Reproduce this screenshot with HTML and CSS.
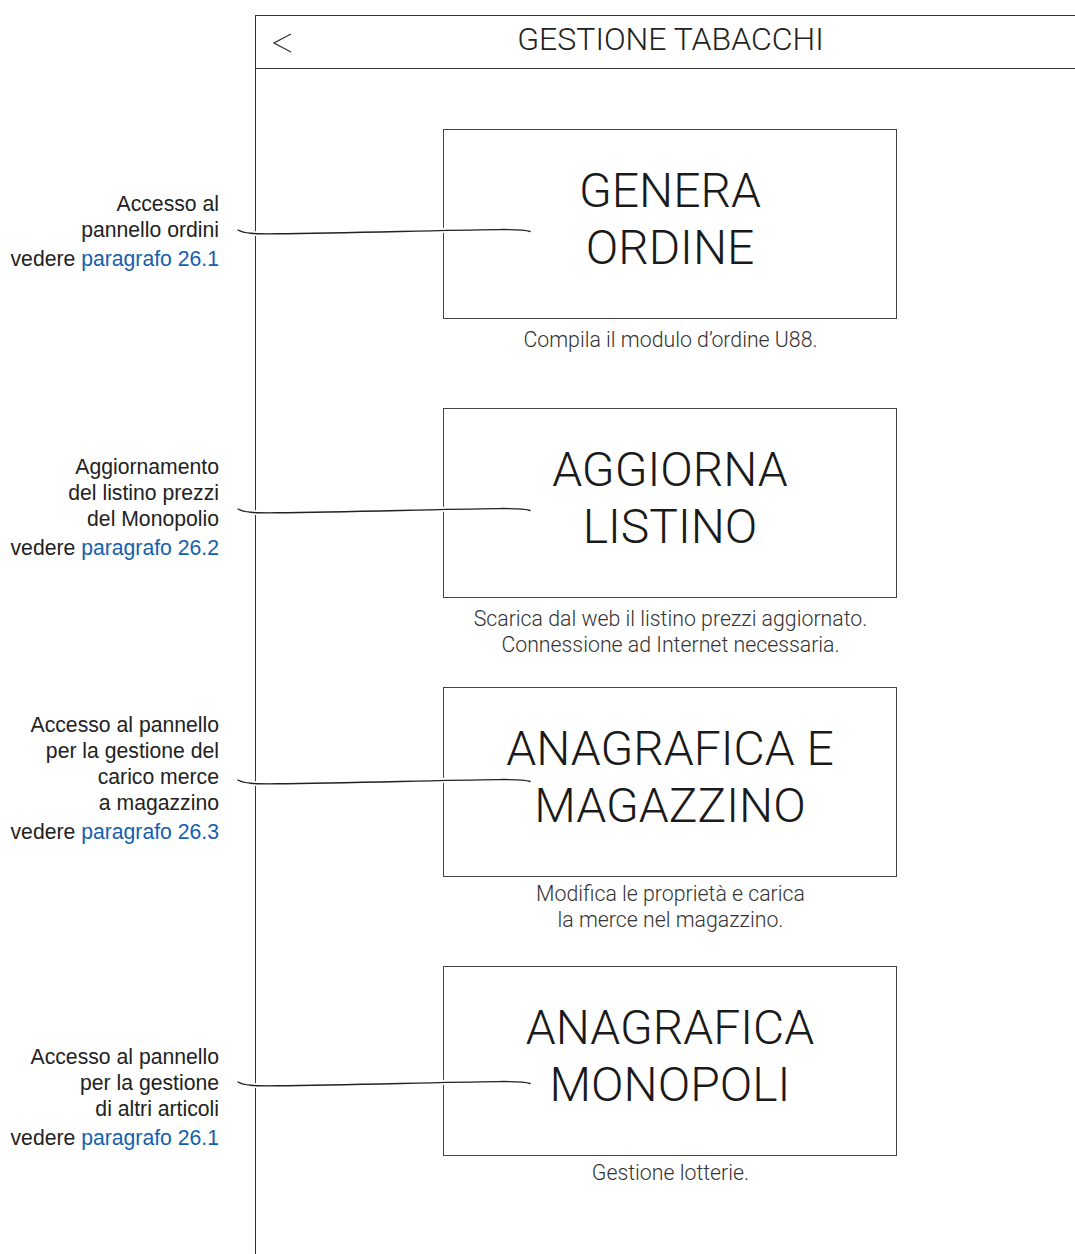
FILE: index.html
```html
<!DOCTYPE html>
<html lang="it">
<head>
    <meta charset="UTF-8">
    <meta name="viewport" content="width=device-width, initial-scale=1.0">
    <title>Gestione tabacchi</title>
    <link rel="stylesheet" href="styles.css">
</head>
<body>
    <div class="page">
        <div class="row">
            <div class="note"></div>
            <header class="bar">
                <svg class="back" width="20" height="22" viewBox="0 0 20 22">
                    <polyline points="18,2 1,11 18,20" fill="none" stroke="#333" stroke-width="1.2"/>
                </svg>
                <h1 class="title">GESTIONE TABACCHI</h1>
            </header>
        </div>

        <section class="row">
            <p class="note n1">Accesso al<br>pannello ordini<span class="ref">vedere <a href="#">paragrafo 26.1</a></span></p>
            <div class="cell">
                <div class="tile">GENERA<br>ORDINE</div>
                <p class="caption">Compila il modulo d’ordine U88.</p>
            </div>
            <svg class="callout c1" width="296" height="10" viewBox="0 0 296 10">
                <path class="halo" d="M2 4 C8 7.5 18 8 40 7.8 C120 7 200 4.2 262 3.6 C280 3.4 290 4 294 5.5"/>
                <path class="ink" d="M2 4 C8 7.5 18 8 40 7.8 C120 7 200 4.2 262 3.6 C280 3.4 290 4 294 5.5"/>
            </svg>
        </section>

        <section class="row">
            <p class="note n2">Aggiornamento<br>del listino prezzi<br>del Monopolio<span class="ref">vedere <a href="#">paragrafo 26.2</a></span></p>
            <div class="cell">
                <div class="tile">AGGIORNA<br>LISTINO</div>
                <p class="caption">Scarica dal web il listino prezzi aggiornato.<br>Connessione ad Internet necessaria.</p>
            </div>
            <svg class="callout c2" width="296" height="10" viewBox="0 0 296 10">
                <path class="halo" d="M2 4 C8 7.5 18 8 40 7.8 C120 7 200 4.2 262 3.6 C280 3.4 290 4 294 5.5"/>
                <path class="ink" d="M2 4 C8 7.5 18 8 40 7.8 C120 7 200 4.2 262 3.6 C280 3.4 290 4 294 5.5"/>
            </svg>
        </section>

        <section class="row">
            <p class="note n3">Accesso al pannello<br>per la gestione del<br>carico merce<br>a magazzino<span class="ref">vedere <a href="#">paragrafo 26.3</a></span></p>
            <div class="cell">
                <div class="tile">ANAGRAFICA E<br>MAGAZZINO</div>
                <p class="caption close">Modifica le proprietà e carica<br>la merce nel magazzino.</p>
            </div>
            <svg class="callout c3" width="296" height="10" viewBox="0 0 296 10">
                <path class="halo" d="M2 4 C8 7.5 18 8 40 7.8 C120 7 200 4.2 262 3.6 C280 3.4 290 4 294 5.5"/>
                <path class="ink" d="M2 4 C8 7.5 18 8 40 7.8 C120 7 200 4.2 262 3.6 C280 3.4 290 4 294 5.5"/>
            </svg>
        </section>

        <section class="row">
            <p class="note n4">Accesso al pannello<br>per la gestione<br>di altri articoli<span class="ref">vedere <a href="#">paragrafo 26.1</a></span></p>
            <div class="cell">
                <div class="tile">ANAGRAFICA<br>MONOPOLI</div>
                <p class="caption close">Gestione lotterie.</p>
            </div>
            <svg class="callout c4" width="296" height="10" viewBox="0 0 296 10">
                <path class="halo" d="M2 4 C8 7.5 18 8 40 7.8 C120 7 200 4.2 262 3.6 C280 3.4 290 4 294 5.5"/>
                <path class="ink" d="M2 4 C8 7.5 18 8 40 7.8 C120 7 200 4.2 262 3.6 C280 3.4 290 4 294 5.5"/>
            </svg>
        </section>

        <div class="row tail">
            <div class="note"></div>
            <div class="cell"></div>
        </div>
    </div>
</body>
</html>
```

FILE: styles.css
```css
html, body{
    margin: 0;
    background: #fff;
    overflow: hidden;
}
.page{
    display: flex;
    flex-direction: column;
    min-height: 100vh;
    padding-top: 15px;
    box-sizing: border-box;
    color: #222;
}
.row{
    display: grid;
    grid-template-columns: 219px 830px;
    column-gap: 36px;
    position: relative;
}
.tail{
    flex: 1;
}

/* header of the screen */
.bar{
    height: 54px;
    box-sizing: border-box;
    border: 1px solid #333;
    border-right: none;
    display: flex;
    align-items: center;
    justify-content: center;
    position: relative;
}
.back{
    position: absolute;
    left: 17px;
    top: 16px;
}
.title{
    margin: 0;
    font-family: Roboto, "Noto Sans", sans-serif;
    font-weight: 300;
    font-size: 32px;
    color: #222;
    line-height: 1;
    padding-bottom: 7px;
}

/* screen column */
.cell{
    border-left: 1px solid #333;
    height: 279px;
    box-sizing: border-box;
    padding-top: 60px;
    display: flex;
    flex-direction: column;
    align-items: center;
}
.tail .cell{
    height: auto;
}
.tile{
    flex-shrink: 0;
    width: 454px;
    height: 190px;
    margin-right: 1px;
    box-sizing: border-box;
    border: 1px solid #444;
    display: flex;
    align-items: center;
    justify-content: center;
    text-align: center;
    font-family: Roboto, "Noto Sans", sans-serif;
    font-weight: 300;
    font-size: 48px;
    line-height: 57px;
    color: #1a1a1a;
    padding-bottom: 10px;
}
.caption{
    flex-shrink: 0;
    margin: 8px 0 0;
    text-align: center;
    font-family: Roboto, "Noto Sans", sans-serif;
    font-weight: 300;
    font-size: 21.3px;
    line-height: 26px;
    color: #333;
}
.caption.close{
    margin-top: 4px;
}

/* annotations */
.note{
    margin: 0;
    text-align: right;
    font-family: "Liberation Sans", Arial, sans-serif;
    font-size: 21.2px;
    line-height: 26px;
    color: #222;
}
.note .ref{
    display: block;
    margin-top: 3px;
    white-space: nowrap;
}
.note a{
    color: #1560ad;
    text-decoration: none;
}
.n1{ margin-top: 122px; }
.n2{ margin-top: 106px; }
.n3{ margin-top: 85px; }
.n4{ margin-top: 138px; }

.callout{
    position: absolute;
    left: 236px;
}
.callout .halo{
    fill: none;
    stroke: #fff;
    stroke-width: 5;
}
.callout .ink{
    fill: none;
    stroke: #222;
    stroke-width: 1.4;
    stroke-linecap: round;
}
.c1{ top: 157px; }
.c2{ top: 157px; }
.c3{ top: 149px; }
.c4{ top: 172px; }
```
